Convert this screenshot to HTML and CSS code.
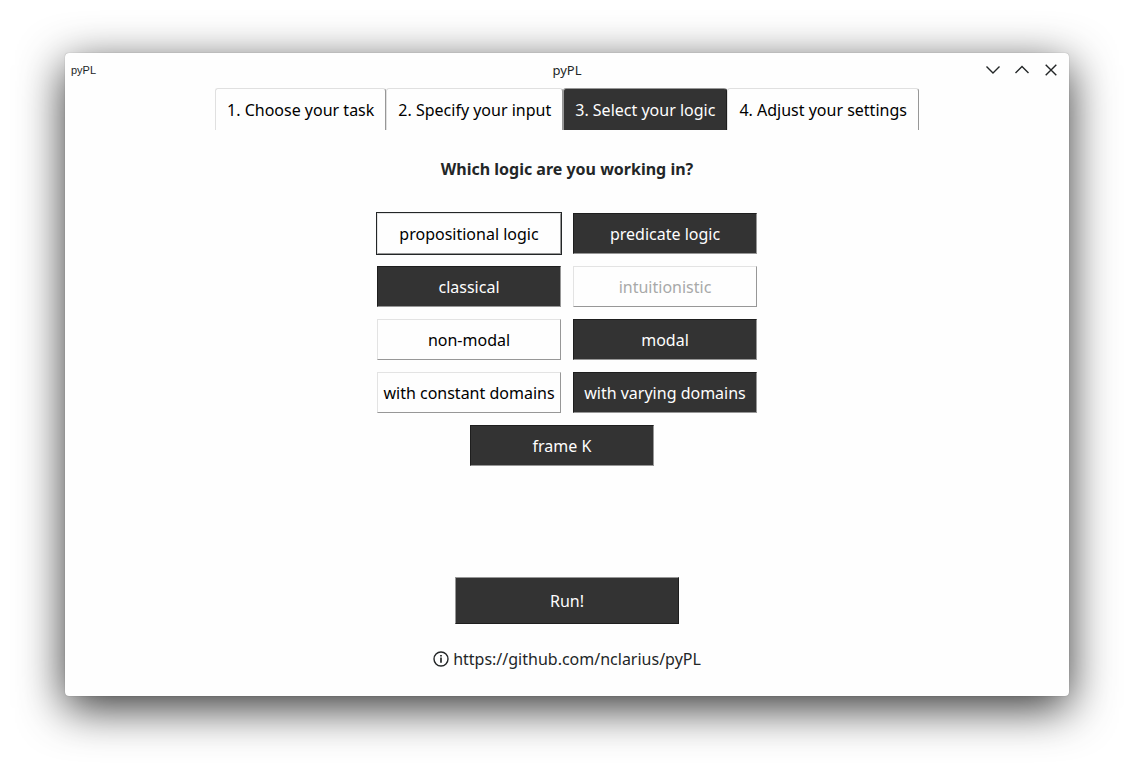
FILE: index.html
```html
<!DOCTYPE html>
<html lang="en">
<head>
<meta charset="utf-8">
<title>pyPL</title>
<link rel="stylesheet" href="styles.css">
</head>
<body>
<div class="window">
  <header class="titlebar">
    <span class="app-icon">pyPL</span>
    <h1 class="title">pyPL</h1>
    <div class="window-controls">
      <button class="control" aria-label="Minimize"><svg width="16" height="16" viewBox="0 0 16 16"><path d="M1.5 4.5 8 11l6.5-6.5"/></svg></button>
      <button class="control" aria-label="Maximize"><svg width="16" height="16" viewBox="0 0 16 16"><path d="M1.5 11 8 4.5l6.5 6.5"/></svg></button>
      <button class="control" aria-label="Close"><svg width="16" height="16" viewBox="0 0 16 16"><path d="M2.7 2.7l10.6 10.6M13.3 2.7 2.7 13.3"/></svg></button>
    </div>
  </header>
  <nav class="tabs" role="tablist">
    <button class="tab" role="tab" aria-selected="false">1. Choose your task</button>
    <button class="tab" role="tab" aria-selected="false">2. Specify your input</button>
    <button class="tab" role="tab" aria-selected="true">3. Select your logic</button>
    <button class="tab" role="tab" aria-selected="false">4. Adjust your settings</button>
  </nav>
  <main class="content">
    <h2 class="question">Which logic are you working in?</h2>
    <div class="options">
      <button class="option focused" aria-pressed="false">propositional logic</button>
      <button class="option" aria-pressed="true">predicate logic</button>
      <button class="option" aria-pressed="true">classical</button>
      <button class="option" aria-pressed="false" disabled>intuitionistic</button>
      <button class="option" aria-pressed="false">non-modal</button>
      <button class="option" aria-pressed="true">modal</button>
      <button class="option" aria-pressed="false">with constant domains</button>
      <button class="option" aria-pressed="true">with varying domains</button>
    </div>
    <div class="frames">
      <button class="option" aria-pressed="true">frame K</button>
    </div>
    <button class="run">Run!</button>
    <a class="link" href="https://github.com/nclarius/pyPL"><svg width="16" height="16" viewBox="0 0 16 16" aria-hidden="true"><circle cx="8" cy="8" r="7"/><path d="M8 6.6v5.2M8 3.9v1.6" stroke-width="1.7"/></svg>https://github.com/nclarius/pyPL</a>
  </main>
</div>
</body>
</html>
```
FILE: styles.css
```css
* {
  box-sizing: border-box;
}

body {
  margin: 0;
  min-height: 100vh;
  padding: 53px 65px 77px;
  display: flex;
  background: #fff;
  color: #232627;
  font: 16px/22px "Noto Sans", sans-serif;
}

button {
  margin: 0;
  padding: 0;
  font: inherit;
  color: #000;
  background: #fefefe;
  border: 1px solid;
  border-radius: 0;
  white-space: nowrap;
}

.window {
  flex: 1;
  display: flex;
  flex-direction: column;
  background: #fefefe;
  border-radius: 4px;
  box-shadow: 0 0 1px rgba(0, 0, 0, 0.4), 0 12px 46px rgba(0, 0, 0, 0.8);
}

.titlebar {
  display: grid;
  grid-template-columns: 1fr auto 1fr;
  align-items: center;
  height: 35px;
  padding: 0 10px 2px 6px;
}

.app-icon {
  font: 11px/14px "Liberation Sans", sans-serif;
}

.title {
  margin: 0;
  padding-left: 4px;
  font-size: 13px;
  font-weight: 400;
  line-height: 18px;
}

.window-controls {
  display: flex;
  justify-content: flex-end;
  gap: 13px;
}

.control {
  display: flex;
  border: 0;
  background: none;
}

svg {
  fill: none;
  stroke: #232627;
  stroke-width: 1.4;
}

.tabs {
  display: flex;
  justify-content: center;
}

.tab {
  height: 42px;
  padding: 0 11px;
  border-color: #e0e0e0 #979797 transparent #e0e0e0;
  border-bottom: 0;
  border-radius: 3px 3px 0 0;
}

.tab[aria-selected="true"] {
  color: #fefefe;
  background: #333;
  border-color: #979797 #1e1e1e transparent #979797;
}

.content {
  flex: 1;
  display: flex;
  flex-direction: column;
  align-items: center;
  padding: 28px 0 26px;
}

.question {
  margin: 0 0 33px;
  font-size: 16px;
  font-weight: 700;
  line-height: 22px;
}

.options {
  display: grid;
  grid-template-columns: 184px 184px;
  gap: 12px;
}

.option {
  width: 184px;
  height: 41px;
  border-color: #e3e3e3 #979797 #979797 #e3e3e3;
}

.option[aria-pressed="true"] {
  color: #fefefe;
  background: #333;
  border-color: #1e1e1e #979797 #979797 #1e1e1e;
}

.option:disabled {
  color: #a8a9a9;
}

.option.focused {
  outline: 1px solid #232627;
}

.frames {
  padding: 12px 10px 0 0;
}

.run {
  width: 224px;
  height: 47px;
  margin: auto 0 24px;
  color: #fefefe;
  background: #333;
  border-color: #979797 #1e1e1e #1e1e1e #979797;
}

.link {
  display: flex;
  align-items: center;
  gap: 4px;
  color: inherit;
  text-decoration: none;
}
```
